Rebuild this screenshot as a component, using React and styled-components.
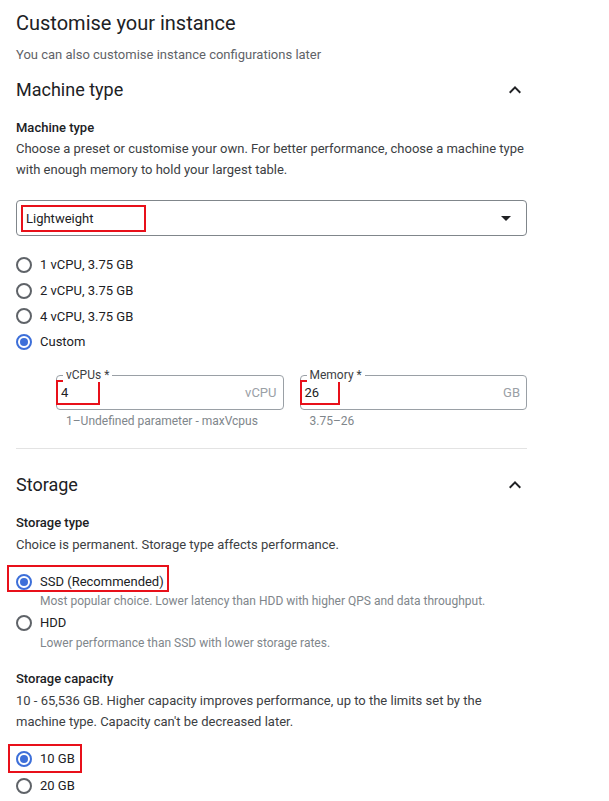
import React from 'react';
import styled, { createGlobalStyle } from 'styled-components';

const Global = createGlobalStyle`
  html, body { margin: 0; padding: 0; background: #ffffff; }
  body {
    font-family: Roboto, "Noto Sans", "Liberation Sans", Arial, sans-serif;
    color: #202124;
    -webkit-font-smoothing: antialiased;
  }
  * { box-sizing: border-box; }
`;

const RED = '#e8101a';
const BLUE = '#3d6fd9';

const Page = styled.div`
  width: 511px;
  margin-left: 16px;
  padding-top: 11px;
  display: flex;
  flex-direction: column;
`;

const Title = styled.h1`
  margin: 0;
  font-size: 20px;
  line-height: 24px;
  font-weight: 400;
  color: #202124;
`;

const Subtitle = styled.p`
  margin: 10px 0 0;
  font-size: 13px;
  line-height: 20px;
  color: #5f6368;
`;

const SectionHeader = styled.div`
  margin-top: ${p => p.$mt}px;
  height: 24px;
  display: flex;
  align-items: center;
  justify-content: space-between;
`;

const SectionTitle = styled.h2`
  margin: 0;
  font-size: 18px;
  line-height: 24px;
  font-weight: 400;
  color: #202124;
`;

const FieldLabel = styled.div`
  margin-top: ${p => p.$mt}px;
  font-size: 13px;
  line-height: 20px;
  font-weight: 500;
  color: #202124;
`;

const Desc = styled.p`
  margin: ${p => p.$mt || 0}px 0 0;
  font-size: 13px;
  line-height: 21px;
  color: #3c4043;
`;

const Select = styled.div`
  margin-top: 20px;
  height: 36px;
  border: 1px solid #80868b;
  border-radius: 4px;
  display: flex;
  align-items: center;
  justify-content: space-between;
  padding: 0 8px 0 4px;
`;

const SelectValue = styled.span`
  width: 125px;
  height: 27px;
  border: 2px solid ${RED};
  padding-left: 3px;
  display: flex;
  align-items: center;
  font-size: 13px;
  color: #202124;
`;

const RadioGroup = styled.div`
  margin-top: ${p => p.$mt || 0}px;
  display: flex;
  flex-direction: column;
`;

const RadioRow = styled.div`
  position: relative;
  align-self: flex-start;
  height: ${p => p.$h || 26}px;
  margin-top: ${p => p.$mt || 0}px;
  display: flex;
  align-items: center;
  gap: 8px;
  font-size: 13px;
  color: #202124;
`;

const Mark = styled.span`
  position: absolute;
  left: ${p => p.$l}px;
  top: ${p => p.$t}px;
  width: ${p => p.$w}px;
  height: ${p => p.$h}px;
  border: 2px solid ${RED};
  pointer-events: none;
`;

const RadioCircle = styled.span`
  width: 16px;
  height: 16px;
  border-radius: 50%;
  border: 2px solid ${p => (p.$checked ? BLUE : '#5f6368')};
  display: flex;
  align-items: center;
  justify-content: center;
  flex: none;
  &::after {
    content: '';
    width: 8px;
    height: 8px;
    border-radius: 50%;
    background: ${p => (p.$checked ? BLUE : 'transparent')};
  }
`;

const RadioHint = styled.div`
  margin: ${p => p.$mt || 0}px 0 0 24px;
  font-size: 12px;
  line-height: 14px;
  color: #80868b;
`;

const CustomFields = styled.div`
  margin: 20px 0 0 40px;
  display: grid;
  grid-template-columns: 1fr 1fr;
  column-gap: 16px;
`;

const FieldCol = styled.div`
  display: flex;
  flex-direction: column;
`;

const Outlined = styled.div`
  position: relative;
  height: 35px;
  border: 1px solid #9aa0a6;
  border-radius: 4px;
  display: flex;
  align-items: center;
  justify-content: space-between;
  padding-right: 6px;
`;

const FloatLabel = styled.span`
  position: absolute;
  top: -8px;
  left: 6px;
  padding: 0 3px;
  background: #ffffff;
  font-size: 12px;
  line-height: 14px;
  color: #3c4043;
`;

const ValueBox = styled.span`
  width: ${p => p.$w}px;
  height: 25px;
  margin-left: -1px;
  border: 2px solid ${RED};
  padding-left: 3px;
  display: flex;
  align-items: center;
  font-size: 13px;
  color: #202124;
`;

const Suffix = styled.span`
  font-size: 13px;
  color: #9aa0a6;
`;

const Helper = styled.div`
  margin: 3px 0 0 10px;
  font-size: 12px;
  line-height: 16px;
  color: #80868b;
`;

const Divider = styled.hr`
  margin: 19px 0 0;
  border: 0;
  height: 1px;
  background: #e3e3e3;
`;

const ChevronUp = () => (
  <svg width="24" height="24" viewBox="0 0 24 24" aria-hidden="true">
    <path d="M12 8l-6 6 1.41 1.41L12 10.83l4.59 4.58L18 14z" fill="#202124" />
  </svg>
);

const ArrowDropDown = () => (
  <svg width="24" height="24" viewBox="0 0 24 24" aria-hidden="true">
    <path d="M7 10l5 5 5-5z" fill="#202124" />
  </svg>
);

const Radio = ({ checked, children, mark, h, mt }) => (
  <RadioRow $h={h} $mt={mt}>
    <RadioCircle $checked={checked} />
    <span>{children}</span>
    {mark && <Mark $l={mark.l} $t={mark.t} $w={mark.w} $h={mark.h} />}
  </RadioRow>
);

export default function App() {
  return (
    <>
      <Global />
      <Page>
        <Title>Customise your instance</Title>
        <Subtitle>You can also customise instance configurations later</Subtitle>

        <SectionHeader $mt={13}>
          <SectionTitle>Machine type</SectionTitle>
          <ChevronUp />
        </SectionHeader>

        <FieldLabel $mt={16}>Machine type</FieldLabel>
        <Desc>
          Choose a preset or customise your own. For better performance, choose a machine type
          with enough memory to hold your largest table.
        </Desc>

        <Select>
          <SelectValue>Lightweight</SelectValue>
          <ArrowDropDown />
        </Select>

        <RadioGroup $mt={16}>
          <Radio h={25.7}>1 vCPU, 3.75 GB</Radio>
          <Radio h={25.7}>2 vCPU, 3.75 GB</Radio>
          <Radio h={25.7}>4 vCPU, 3.75 GB</Radio>
          <Radio h={25.7} checked>Custom</Radio>
        </RadioGroup>

        <CustomFields>
          <FieldCol>
            <Outlined>
              <FloatLabel>vCPUs *</FloatLabel>
              <ValueBox $w={44}>4</ValueBox>
              <Suffix>vCPU</Suffix>
            </Outlined>
            <Helper>1–Undefined parameter - maxVcpus</Helper>
          </FieldCol>
          <FieldCol>
            <Outlined>
              <FloatLabel>Memory *</FloatLabel>
              <ValueBox $w={40}>26</ValueBox>
              <Suffix>GB</Suffix>
            </Outlined>
            <Helper>3.75–26</Helper>
          </FieldCol>
        </CustomFields>

        <Divider />

        <SectionHeader $mt={24}>
          <SectionTitle>Storage</SectionTitle>
          <ChevronUp />
        </SectionHeader>

        <FieldLabel $mt={16}>Storage type</FieldLabel>
        <Desc $mt={1}>Choice is permanent. Storage type affects performance.</Desc>

        <RadioGroup $mt={14}>
          <Radio checked mark={{ l: -9, t: -4, w: 162, h: 27 }}>SSD (Recommended)</Radio>
          <RadioHint $mt={-1}>
            Most popular choice. Lower latency than HDD with higher QPS and data throughput.
          </RadioHint>
          <Radio mt={2}>HDD</Radio>
          <RadioHint>Lower performance than SSD with lower storage rates.</RadioHint>
        </RadioGroup>

        <FieldLabel $mt={19}>Storage capacity</FieldLabel>
        <Desc $mt={1}>
          10 - 65,536 GB. Higher capacity improves performance, up to the limits set by the
          machine type. Capacity can't be decreased later.
        </Desc>

        <RadioGroup $mt={14}>
          <Radio checked mark={{ l: -8, t: -2, w: 74, h: 29 }}>10 GB</Radio>
          <Radio mt={1}>20 GB</Radio>
        </RadioGroup>
      </Page>
    </>
  );
}
